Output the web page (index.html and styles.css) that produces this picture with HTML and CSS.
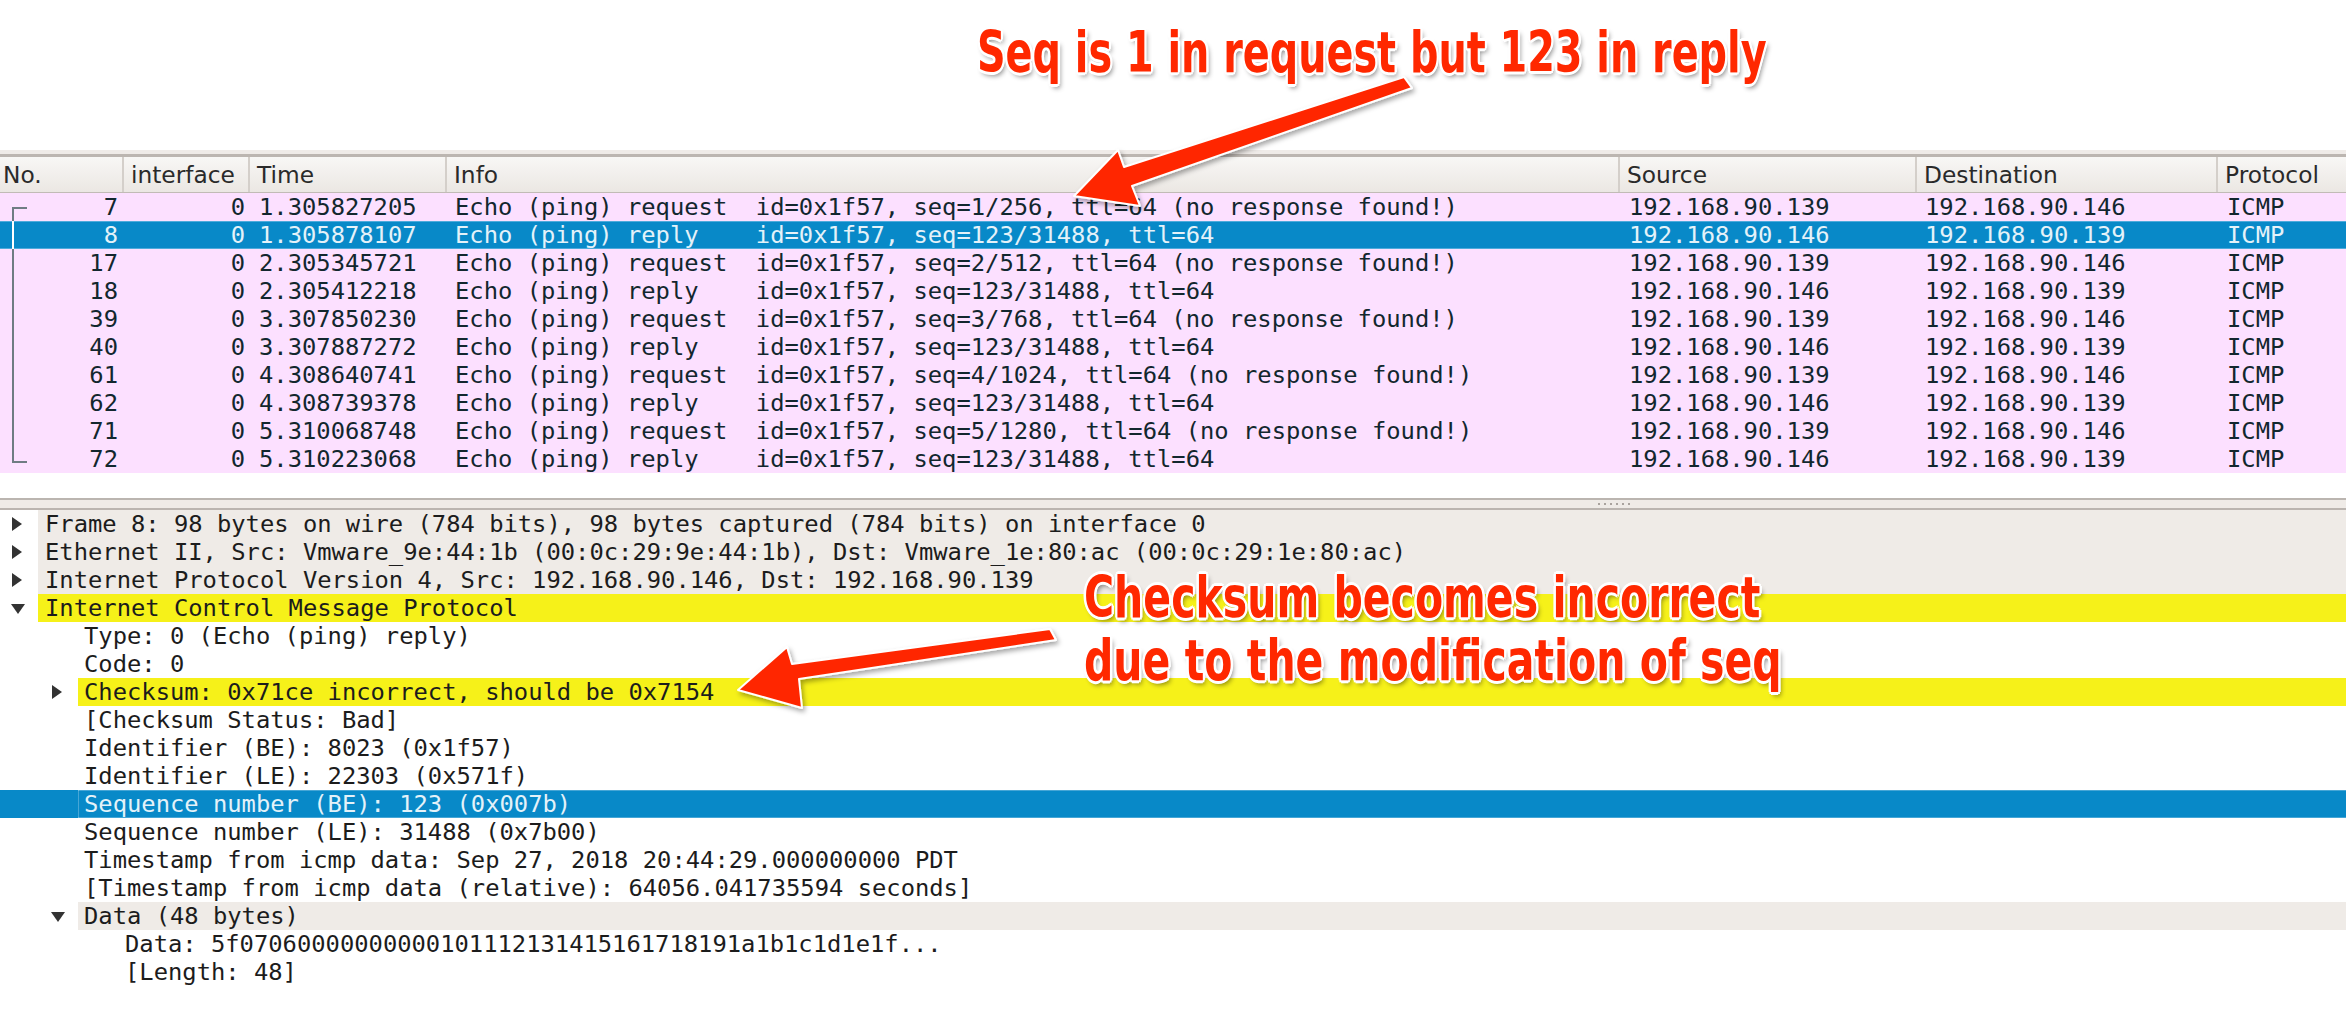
FILE: index.html
```html
<!DOCTYPE html>
<html>
<head>
<meta charset="utf-8">
<title>Wireshark ICMP</title>
<link rel="stylesheet" href="styles.css">
</head>
<body>
<div class="screen">
  <div class="top-space"></div>
  <div class="pane-frame"></div>
  <div class="list-head">
    <div class="hc hc-no">No.</div>
    <div class="hc">interface</div>
    <div class="hc">Time</div>
    <div class="hc">Info</div>
    <div class="hc">Source</div>
    <div class="hc">Destination</div>
    <div class="hc hc-last">Protocol</div>
  </div>
  <div class="list-body">
    <div class="row"><span class="c-no rel-first">7</span><span class="c-if">0</span><span class="c-time">1.305827205</span><span class="c-info">Echo (ping) request  id=0x1f57, seq=1/256, ttl=64 (no response found!)</span><span class="c-src">192.168.90.139</span><span class="c-dst">192.168.90.146</span><span class="c-proto">ICMP</span></div>
    <div class="row selected"><span class="c-no rel-mid">8</span><span class="c-if">0</span><span class="c-time">1.305878107</span><span class="c-info">Echo (ping) reply    id=0x1f57, seq=123/31488, ttl=64</span><span class="c-src">192.168.90.146</span><span class="c-dst">192.168.90.139</span><span class="c-proto">ICMP</span></div>
    <div class="row"><span class="c-no rel-mid">17</span><span class="c-if">0</span><span class="c-time">2.305345721</span><span class="c-info">Echo (ping) request  id=0x1f57, seq=2/512, ttl=64 (no response found!)</span><span class="c-src">192.168.90.139</span><span class="c-dst">192.168.90.146</span><span class="c-proto">ICMP</span></div>
    <div class="row"><span class="c-no rel-mid">18</span><span class="c-if">0</span><span class="c-time">2.305412218</span><span class="c-info">Echo (ping) reply    id=0x1f57, seq=123/31488, ttl=64</span><span class="c-src">192.168.90.146</span><span class="c-dst">192.168.90.139</span><span class="c-proto">ICMP</span></div>
    <div class="row"><span class="c-no rel-mid">39</span><span class="c-if">0</span><span class="c-time">3.307850230</span><span class="c-info">Echo (ping) request  id=0x1f57, seq=3/768, ttl=64 (no response found!)</span><span class="c-src">192.168.90.139</span><span class="c-dst">192.168.90.146</span><span class="c-proto">ICMP</span></div>
    <div class="row"><span class="c-no rel-mid">40</span><span class="c-if">0</span><span class="c-time">3.307887272</span><span class="c-info">Echo (ping) reply    id=0x1f57, seq=123/31488, ttl=64</span><span class="c-src">192.168.90.146</span><span class="c-dst">192.168.90.139</span><span class="c-proto">ICMP</span></div>
    <div class="row"><span class="c-no rel-mid">61</span><span class="c-if">0</span><span class="c-time">4.308640741</span><span class="c-info">Echo (ping) request  id=0x1f57, seq=4/1024, ttl=64 (no response found!)</span><span class="c-src">192.168.90.139</span><span class="c-dst">192.168.90.146</span><span class="c-proto">ICMP</span></div>
    <div class="row"><span class="c-no rel-mid">62</span><span class="c-if">0</span><span class="c-time">4.308739378</span><span class="c-info">Echo (ping) reply    id=0x1f57, seq=123/31488, ttl=64</span><span class="c-src">192.168.90.146</span><span class="c-dst">192.168.90.139</span><span class="c-proto">ICMP</span></div>
    <div class="row"><span class="c-no rel-mid">71</span><span class="c-if">0</span><span class="c-time">5.310068748</span><span class="c-info">Echo (ping) request  id=0x1f57, seq=5/1280, ttl=64 (no response found!)</span><span class="c-src">192.168.90.139</span><span class="c-dst">192.168.90.146</span><span class="c-proto">ICMP</span></div>
    <div class="row"><span class="c-no rel-last">72</span><span class="c-if">0</span><span class="c-time">5.310223068</span><span class="c-info">Echo (ping) reply    id=0x1f57, seq=123/31488, ttl=64</span><span class="c-src">192.168.90.146</span><span class="c-dst">192.168.90.139</span><span class="c-proto">ICMP</span></div>
  </div>
  <div class="list-rest"></div>
  <div class="splitter"><div class="grip"><i></i><i></i><i></i><i></i><i></i><i></i></div></div>
  <div class="tree">
    <div class="node lv0"><span class="tw"><span class="arrow-r"></span></span><span class="lbl shade">Frame 8: 98 bytes on wire (784 bits), 98 bytes captured (784 bits) on interface 0</span></div>
    <div class="node lv0"><span class="tw"><span class="arrow-r"></span></span><span class="lbl shade">Ethernet II, Src: Vmware_9e:44:1b (00:0c:29:9e:44:1b), Dst: Vmware_1e:80:ac (00:0c:29:1e:80:ac)</span></div>
    <div class="node lv0"><span class="tw"><span class="arrow-r"></span></span><span class="lbl shade">Internet Protocol Version 4, Src: 192.168.90.146, Dst: 192.168.90.139</span></div>
    <div class="node lv0"><span class="tw"><span class="arrow-d"></span></span><span class="lbl warn">Internet Control Message Protocol</span></div>
    <div class="node lv1"><span class="tw"></span><span class="lbl">Type: 0 (Echo (ping) reply)</span></div>
    <div class="node lv1"><span class="tw"></span><span class="lbl">Code: 0</span></div>
    <div class="node lv1"><span class="tw"><span class="arrow-r"></span></span><span class="lbl warn">Checksum: 0x71ce incorrect, should be 0x7154</span></div>
    <div class="node lv1"><span class="tw"></span><span class="lbl">[Checksum Status: Bad]</span></div>
    <div class="node lv1"><span class="tw"></span><span class="lbl">Identifier (BE): 8023 (0x1f57)</span></div>
    <div class="node lv1"><span class="tw"></span><span class="lbl">Identifier (LE): 22303 (0x571f)</span></div>
    <div class="node lv1 sel"><span class="tw"></span><span class="lbl focus">Sequence number (BE): 123 (0x007b)</span></div>
    <div class="node lv1"><span class="tw"></span><span class="lbl">Sequence number (LE): 31488 (0x7b00)</span></div>
    <div class="node lv1"><span class="tw"></span><span class="lbl">Timestamp from icmp data: Sep 27, 2018 20:44:29.000000000 PDT</span></div>
    <div class="node lv1"><span class="tw"></span><span class="lbl">[Timestamp from icmp data (relative): 64056.041735594 seconds]</span></div>
    <div class="node lv1"><span class="tw"><span class="arrow-d"></span></span><span class="lbl shade">Data (48 bytes)</span></div>
    <div class="node lv2"><span class="tw"></span><span class="lbl">Data: 5f07060000000000101112131415161718191a1b1c1d1e1f...</span></div>
    <div class="node lv2"><span class="tw"></span><span class="lbl">[Length: 48]</span></div>
  </div>

  <svg class="arrows" width="2346" height="1010" viewBox="0 0 2346 1010" xmlns="http://www.w3.org/2000/svg">
    <defs>
      <filter id="sh" x="-10%" y="-10%" width="120%" height="130%">
        <feDropShadow dx="2" dy="3" stdDeviation="2.5" flood-color="#000" flood-opacity="0.35"/>
      </filter>
    </defs>
    <polygon filter="url(#sh)" fill="#ff2800" stroke="#ffffff" stroke-width="2" stroke-linejoin="round"
      points="1074,196 1118,150 1124,167 1404,77 1412,88 1132,186 1140,206"/>
    <polygon filter="url(#sh)" fill="#ff2800" stroke="#ffffff" stroke-width="2" stroke-linejoin="round"
      points="738,690 787,647 792,664 1050,629 1056,640 799,679 802,708"/>
  </svg>
  <div class="note note-top">Seq is 1 in request but 123 in reply</div>
  <div class="note note-low">Checksum becomes incorrect<br>due to the modification of seq</div>
</div>
</body>
</html>
```

FILE: styles.css
```css
* { box-sizing: border-box; margin: 0; padding: 0; }
html, body { width: 2346px; height: 1010px; overflow: hidden; background: #ffffff; }
body { font-family: "DejaVu Sans Mono", "Liberation Mono", monospace; }

.screen {
  position: relative;
  width: 2346px;
  height: 1010px;
  display: flex;
  flex-direction: column;
}
.top-space { height: 150px; flex: none; }
.pane-frame {
  height: 7px;
  flex: none;
  background: #efebe8;
  border-bottom: 3px solid #bcb6b1;
}

/* packet list */
.list-head, .row {
  display: grid;
  grid-template-columns: 124px 126px 197px 1173px 297px 301px 1fr;
}
.list-head {
  height: 36px;
  flex: none;
  background: linear-gradient(#f8f7f5, #ebe7e3);
  border-bottom: 1px solid #c1bbb6;
  font-family: "DejaVu Sans", sans-serif;
  font-size: 23.3px;
  color: #2a2a2a;
}
.hc {
  padding-left: 7px;
  line-height: 35px;
  border-right: 2px solid #d4cfca;
  white-space: nowrap;
  overflow: hidden;
}
.hc-no { padding-left: 3px; }
.hc-last { border-right: none; }

.list-body { flex: none; }
.row {
  height: 28px;
  line-height: 28px;
  background: #fce0ff;
  color: #12272e;
  font-size: 23.8px;
  white-space: pre;
}
.row > span { overflow: hidden; }
.c-no { position: relative; text-align: right; padding-right: 6px; }
.c-if { text-align: right; padding-right: 5px; }
.c-time { padding-left: 9px; }
.c-info { padding-left: 8px; }
.c-src { padding-left: 9px; }
.c-dst { padding-left: 8px; }
.c-proto { padding-left: 9px; }

.row.selected {
  background: #0889c8;
  color: #e4f2f9;
  box-shadow: inset 0 1px 0 #4eabdb, inset 0 -1px 0 #4eabdb;
}

/* related packets bracket */
.rel-first::before, .rel-mid::before, .rel-last::before {
  content: "";
  position: absolute;
  left: 12px;
  width: 13px;
  border-left: 2px solid #6f7c83;
}
.rel-first::before { top: 14px; bottom: 0; border-top: 2px solid #6f7c83; }
.rel-mid::before { top: 0; bottom: 0; }
.rel-last::before { top: 0; height: 16px; border-bottom: 2px solid #6f7c83; }
.selected .rel-mid::before { border-left-color: #ffffff; }

.list-rest { height: 25px; flex: none; background: #ffffff; }

.splitter {
  height: 12px;
  flex: none;
  background: #efebe7;
  border-top: 2px solid #bbb5b0;
  border-bottom: 2px solid #bbb5b0;
  display: flex;
  align-items: center;
  padding-left: 1598px;
}
.grip { display: flex; gap: 4px; }
.grip i { display: block; width: 2px; height: 2px; background: #a9a39e; }

/* detail tree */
.tree { flex: none; color: #1c1c1c; font-size: 23.8px; }
.node {
  display: flex;
  height: 28px;
  line-height: 28px;
  white-space: pre;
}
.tw {
  flex: none;
  position: relative;
  height: 28px;
}
.lv0 .tw { width: 38px; }
.lv1 .tw { width: 78px; }
.lv2 .tw { width: 118px; }
.lbl { flex: 1; padding-left: 7px; }
.lv1 .lbl { padding-left: 6px; }
.shade { background: #efebe7; }
.warn { background: #f6f119; }
.node.sel { background: #0889c8; color: #e4f2f9; }
.focus { box-shadow: inset 1px 0 0 rgba(255,255,255,0.25), inset 0 1px 0 rgba(255,255,255,0.25), inset 0 -1px 0 rgba(255,255,255,0.25); }

.arrow-r, .arrow-d { position: absolute; width: 0; height: 0; }
.arrow-r {
  right: 16px;
  top: 7px;
  border-left: 10px solid #333333;
  border-top: 7px solid transparent;
  border-bottom: 7px solid transparent;
}
.arrow-d {
  right: 13px;
  top: 10px;
  border-top: 10px solid #333333;
  border-left: 7px solid transparent;
  border-right: 7px solid transparent;
}

/* annotations */
.arrows { position: absolute; left: 0; top: 0; pointer-events: none; }
.note {
  position: absolute;
  font-family: "Liberation Sans Narrow", "DejaVu Sans Condensed", "Liberation Sans", sans-serif;
  font-weight: bold;
  font-size: 57px;
  color: #ff2800;
  white-space: nowrap;
  transform-origin: left top;
  text-shadow:
    -2px -2px 0 #fff, 2px -2px 0 #fff, -2px 2px 0 #fff, 2px 2px 0 #fff,
    0 -3px 0 #fff, 0 3px 0 #fff, -3px 0 0 #fff, 3px 0 0 #fff,
    3px 4px 6px rgba(0,0,0,0.45);
}
.note-top { left: 977px; top: 24px; line-height: 57px; transform: scaleX(0.775); }
.note-low { left: 1084px; top: 566px; line-height: 63px; transform: scaleX(0.8); }
```
